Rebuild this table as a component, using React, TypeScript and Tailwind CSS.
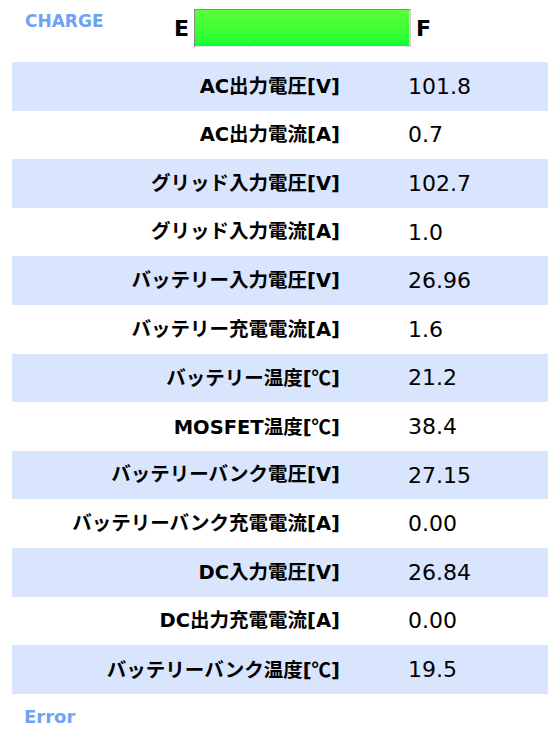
const rows: [string, string][] = [
  ["AC出力電圧[V]", "101.8"],
  ["AC出力電流[A]", "0.7"],
  ["グリッド入力電圧[V]", "102.7"],
  ["グリッド入力電流[A]", "1.0"],
  ["バッテリー入力電圧[V]", "26.96"],
  ["バッテリー充電電流[A]", "1.6"],
  ["バッテリー温度[℃]", "21.2"],
  ["MOSFET温度[℃]", "38.4"],
  ["バッテリーバンク電圧[V]", "27.15"],
  ["バッテリーバンク充電電流[A]", "0.00"],
  ["DC入力電圧[V]", "26.84"],
  ["DC出力充電電流[A]", "0.00"],
  ["バッテリーバンク温度[℃]", "19.5"],
];

// ℃ should come from the CJK font as a single full-width glyph
function Label({ text }: { text: string }) {
  const parts = text.split("℃");
  if (parts.length === 1) return <>{text}</>;
  return (
    <>
      {parts[0]}
      <span className="font-['Noto_Sans_CJK_JP',sans-serif]">℃</span>
      {parts[1]}
    </>
  );
}

export default function App() {
  return (
    <div className="w-[560px] h-[750px] bg-white font-['DejaVu_Sans','Noto_Sans_CJK_JP',sans-serif]">
      {/* header: status + gauge */}
      <div className="flex items-start h-[62px]">
        <div className="w-[150px] pl-[25px] pt-[9px] text-[17px] font-bold text-[#6fa2f7]">CHARGE</div>
        <div className="flex items-center pt-[9px] ml-[24px]">
          <span className="text-[22px] font-bold text-black mr-[5px]">E</span>
          <div className="w-[217px] h-[38px] flex flex-col border-l border-t border-[#8a8a8a] border-r-2 border-r-[#d0d0d0]">
            <div className="flex-1 bg-gradient-to-b from-[#5aff3a] to-[#05ff33]" />
            {/* scale ticks along the bottom edge */}
            <div className="h-[1px] grid grid-cols-4 bg-[#e6e6e6]">
              <div className="border-r border-[#c4c4c4]" />
              <div className="border-r border-[#c4c4c4]" />
              <div className="border-r border-[#c4c4c4]" />
              <div />
            </div>
          </div>
          <span className="text-[22px] font-bold text-black ml-[5px]">F</span>
        </div>
      </div>

      {/* data table */}
      <div className="mx-[12px] w-[536px]">
        {rows.map(([label, value], i) => (
          <div
            key={label}
            className={`grid grid-cols-[328px_1fr] h-[48.6px] items-center ${i % 2 === 0 ? "bg-[#d9e4fd]" : "bg-white"}`}
          >
            <div className="text-right text-[19.5px] font-bold text-black whitespace-nowrap">
              <Label text={label} />
            </div>
            <div className="pl-[68px] text-[22px] text-black">{value}</div>
          </div>
        ))}
      </div>

      <div className="pl-[24px] pt-[9px] text-[18px] font-bold text-[#6fa2f7]">Error</div>
    </div>
  );
}
